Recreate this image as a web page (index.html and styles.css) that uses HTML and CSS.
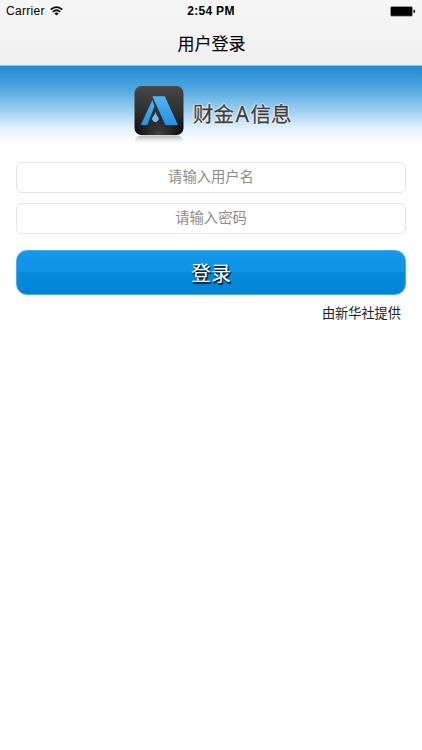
FILE: index.html
```html
<!DOCTYPE html>
<html lang="zh-CN">
<head>
<meta charset="utf-8">
<title>用户登录</title>
<link rel="stylesheet" href="styles.css">
</head>
<body>
<header class="top">
  <div class="status">
    <div class="carrier"><span>Carrier</span>
      <svg class="wifi" viewBox="0 0 13 10" fill="none" stroke="#000" stroke-width="1.7"><path d="M.7 3.6Q6.5-1.5 12.3 3.6"/><path d="M2.8 5.9Q6.5 2.6 10.2 5.9"/><path d="M4.4 7.4Q6.5 5.7 8.6 7.4L6.5 9.6Z" fill="#000" stroke="none"/></svg>
    </div>
    <div class="time">2:54 PM</div>
    <svg class="battery" viewBox="0 0 26 11"><rect x=".25" y=".25" width="22.5" height="10.2" rx="1.5" fill="#777"/><rect x="1" y="1" width="21" height="8.7" rx=".7"/><path d="M23.5 3.8h.8q.8 0 .8 1.5t-.8 1.5h-.8z"/></svg>
  </div>
  <h1 class="title">用户登录</h1>
</header>
<section class="banner">
  <div class="logo">
    <svg class="mark" viewBox="0 0 50 60">
      <defs>
        <linearGradient id="tile" x2="0" y2="1"><stop stop-color="#484848"/><stop offset=".6" stop-color="#2b2b2b"/><stop offset="1" stop-color="#080808"/></linearGradient>
        <radialGradient id="glow" cx=".5" cy="1" r=".5"><stop stop-color="#484848"/><stop offset="1" stop-color="#333" stop-opacity="0"/></radialGradient>
        <linearGradient id="blue" x2="0" y2="1"><stop stop-color="#55b4f2"/><stop offset="1" stop-color="#2492e2"/></linearGradient>
        <linearGradient id="fade" x2="0" y2="1"><stop stop-color="#888" stop-opacity=".6"/><stop offset="1" stop-color="#fff" stop-opacity="0"/></linearGradient>
      </defs>
      <path d="M.5 59V57Q.5 49.5 8 49.5H42Q49.5 49.5 49.5 57V59Z" fill="url(#fade)"/>
      <rect x=".5" y="0" width="49" height="49" rx="7" fill="url(#tile)"/>
      <rect x=".5" y="0" width="49" height="49" rx="7" fill="url(#glow)"/>
      <path d="M18.3 10.2H30.7L44 39H31.4Z" fill="url(#blue)"/>
      <path d="M18.4 14L20.4 20.5L13.3 39H6.7Z" fill="url(#blue)"/>
      <path d="M21.4 25.5Q21.8 28.6 23.7 30.6A3.2 3.2 0 1 1 19.1 30.6Q21 28.6 21.4 25.5Z" fill="#73bdec" stroke="#2b2b2b" stroke-width="1.6" paint-order="stroke"/>
    </svg>
    <span class="name">财金<span class="latin">A</span>信息</span>
  </div>
</section>
<main class="form">
  <div class="field">请输入用户名</div>
  <div class="field">请输入密码</div>
  <button class="login">登录</button>
  <p class="credit">由新华社提供</p>
</main>
</body>
</html>
```
FILE: styles.css
```css
* { box-sizing: border-box; }
body {
  margin: 0;
  height: 750px;
  overflow: hidden;
  background: #fefefe;
  font-family: "Liberation Sans", "Noto Sans CJK SC", sans-serif;
  color: #000;
}
.top {
  height: 66px;
  background: linear-gradient(#f6f6f6, #f0f0f0);
  border-bottom: 1px solid #a3bfca;
}
.status {
  display: grid;
  grid-template-columns: 1fr auto 1fr;
  align-items: center;
  height: 22px;
  padding: 0 6px;
  font-size: 12px;
}
.carrier { display: flex; align-items: center; gap: 5px; letter-spacing: 0.3px; }
.wifi { width: 13px; height: 10px; margin-top: -1px; }
.time { font-weight: bold; letter-spacing: 0.3px; }
.battery { width: 26px; height: 11px; justify-self: end; }
.title {
  margin: 0;
  padding: 1px 0 0 1px;
  text-align: center;
  font-size: 17px;
  font-weight: 400;
  line-height: 43px;
  -webkit-text-stroke: 0.1px #000;
}
.banner {
  height: 81px;
  padding-top: 20px;
  background: linear-gradient(#208cd2 0, #4da5df 22px, #a0d0f0 45px, #e2f1fb 62px, #fefefe 76px);
}
.logo { display: flex; align-items: flex-start; gap: 9.5px; margin-left: 133.5px; }
.mark { width: 50px; height: 60px; }
.name {
  font-size: 20.5px;
  font-weight: 400;
  line-height: 57px;
  white-space: nowrap;
  color: #3b3e44;
  -webkit-text-stroke: 0.3px #3b3e44;
  text-shadow: 1px 0 1px #fff, -1px 0 1px #fff, 0 1px 1px #fff, 0 -1px 1px #fff;
}
.latin { font-family: "Noto Sans", sans-serif; font-size: 21px; margin: 0 1.5px; }
.form { padding: 15px 16px 0; }
.field {
  height: 31px;
  margin-bottom: 10px;
  border: 1px solid #e6e6e6;
  border-radius: 6px;
  background: #fff;
  text-align: center;
  font-size: 14.3px;
  line-height: 29px;
  color: #8c8c8c;
}
.login {
  display: block;
  width: 100%;
  height: 45px;
  margin-top: 16px;
  padding: 0;
  border: 1px solid #48a9e5;
  border-radius: 11px;
  background: linear-gradient(#1398ec 0, #1093e7 50%, #058adc 50%, #0284d7 100%);
  font: 400 20px/42px "Noto Sans CJK SC", sans-serif;
  color: #fff;
  text-shadow: 1px 1px 1px #002038, 1px 2px 1px #00284a;
}
.credit {
  margin: 8px 5px 0 0;
  text-align: right;
  font-size: 13.2px;
  line-height: 21px;
  color: #222;
}
```
